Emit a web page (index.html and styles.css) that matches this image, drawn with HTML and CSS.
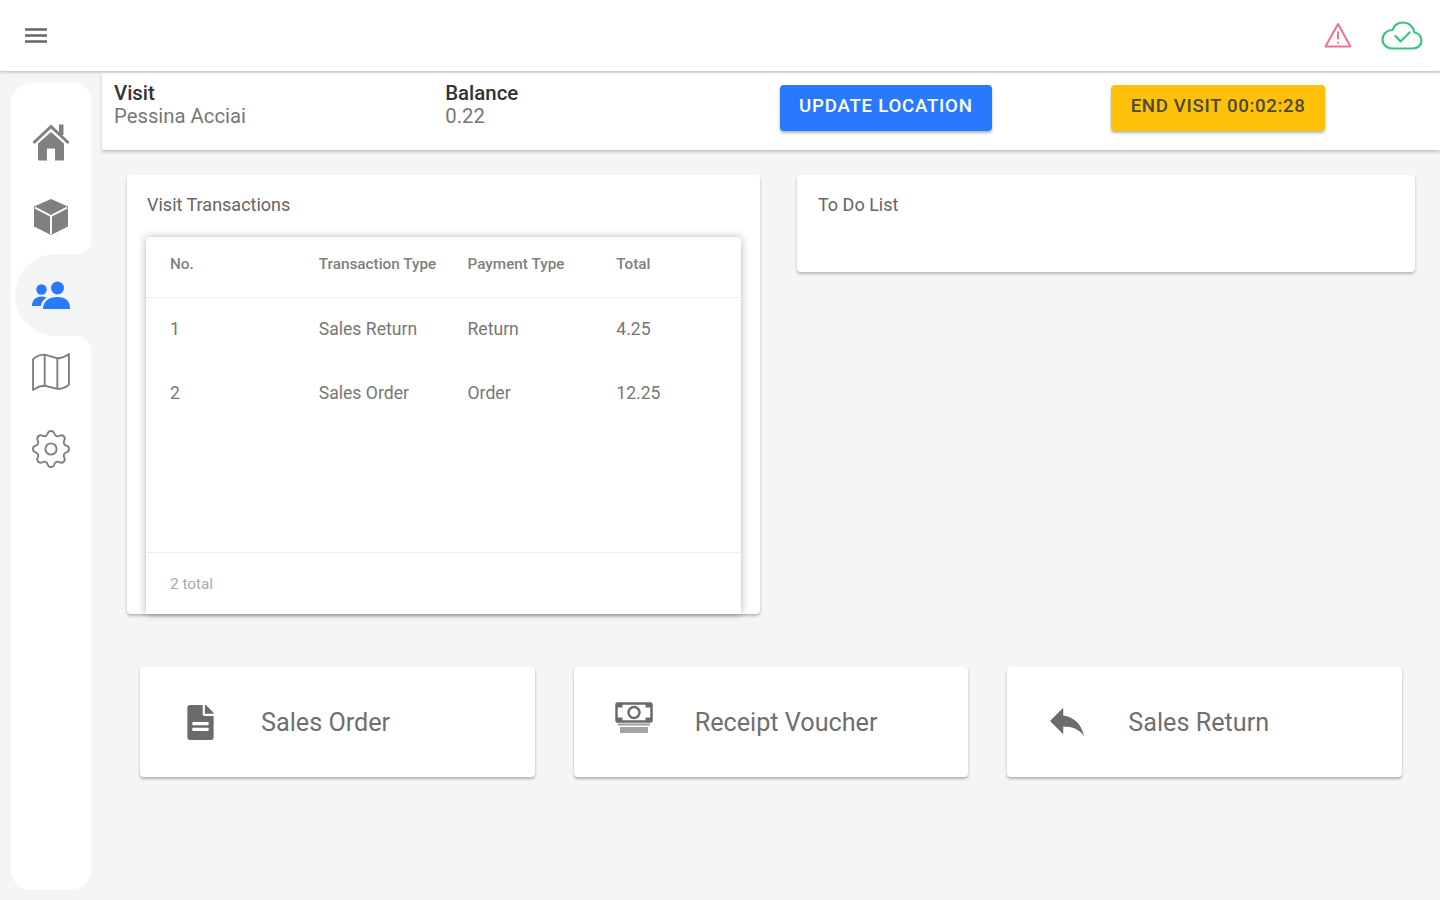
FILE: index.html
```html
<!DOCTYPE html>
<html lang="en">
<head>
<meta charset="utf-8">
<title>Visit</title>
<link rel="stylesheet" href="styles.css">
</head>
<body>
<div class="app">
  <header class="topbar">
    <svg class="menu-icon" viewBox="0 0 22 15"><path d="M0 1.500h22M0 7.500h22M0 13.500h22"/></svg>
    <div class="status-icons">
      <svg class="warn-icon" viewBox="0 0 28 26"><path d="M14 2 L26.500 24.500 H1.500 Z"/><path d="M14 9.500v8M14 20v1.500"/></svg>
      <svg class="cloud-icon" viewBox="0 0 42 29"><path d="M11 27.500h21c5 0 8.500-3.600 8.500-8 0-4.200-3-7.500-7-8C32 6 28 1.500 22 1.500c-5 0-9 3-10.500 7.500C6 9 1.500 13 1.500 18.500c0 5 4.500 9 9.500 9z"/><path d="M14.500 15l5 5.500 9-9"/></svg>
    </div>
  </header>
  <div class="body">
    <nav class="sidebar">
      <div class="nav-top">
        <a class="nav-item">
          <svg class="nav-icon" viewBox="0 0 38 37"><path class="gray-fill" d="M19 8.500 L32 20 V36 Q32 37 31 37 H23 V25 H15 V37 H7 Q6 37 6 36 V20 Z"/><path class="gray-line" d="M1.500 19.500 L19 3 L36.500 19.500"/><path class="gray-fill" d="M27 1h4.500v10.500H27z"/></svg>
        </a>
        <a class="nav-item">
          <svg class="nav-icon cube" viewBox="0 0 36 38"><path class="gray-fill" d="M18 0 L36 8 V29 L18 38 L0 29 V8 Z"/><path class="seam" d="M1 9 L18 18 L35 9 M18 18 V37"/></svg>
        </a>
      </div>
      <div class="nav-active-wrap">
        <a class="nav-item active">
          <svg class="nav-icon" viewBox="0 0 38 28"><circle class="blue" cx="9.500" cy="8.500" r="5.200"/><circle class="blue" cx="25.500" cy="7" r="6.500"/><path class="blue" d="M0 25c0-6 4-9.500 9.500-9.500 2 0 3.700.4 5 1.300C11.500 18.800 9.500 21 8.700 25z"/><path class="blue" d="M11 28c0-8 6-12 14.500-12S38 20 38 28z"/></svg>
        </a>
      </div>
      <div class="nav-bottom">
        <a class="nav-item short">
          <svg class="nav-icon" viewBox="0 0 36 36"><path class="gray-stroke" d="M1 6c3-3 7-4.500 11-4.500L24 5c4 0 7-1 11-4v29c-3 2.500-7 4-11 4L12 31c-4 0-8 2-11 4z"/><path class="gray-stroke" d="M12 1.500V31M24 5v29"/></svg>
        </a>
        <a class="nav-item short">
          <svg class="nav-icon" viewBox="2.500 2.500 19 19"><path class="gray-stroke thin" d="M10.325 4.317c.426-1.756 2.924-1.756 3.350 0a1.724 1.724 0 002.573 1.066c1.543-.94 3.310.826 2.370 2.370a1.724 1.724 0 001.065 2.572c1.756.426 1.756 2.924 0 3.350a1.724 1.724 0 00-1.066 2.573c.94 1.543-.826 3.310-2.370 2.370a1.724 1.724 0 00-2.572 1.065c-.426 1.756-2.924 1.756-3.350 0a1.724 1.724 0 00-2.573-1.066c-1.543.94-3.310-.826-2.370-2.370a1.724 1.724 0 00-1.065-2.572c-1.756-.426-1.756-2.924 0-3.350a1.724 1.724 0 001.066-2.573c-.94-1.543.826-3.310 2.370-2.370.996.608 2.296.07 2.572-1.065z"/><circle class="gray-stroke thin" cx="12" cy="12" r="2.800"/></svg>
        </a>
      </div>
    </nav>
    <main class="main">
      <section class="visit-bar">
        <div class="info"><strong>Visit</strong><span>Pessina Acciai</span></div>
        <div class="info"><strong>Balance</strong><span>0.22</span></div>
        <div class="btn-cell"><button class="btn btn-blue">UPDATE LOCATION</button></div>
        <div class="btn-cell"><button class="btn btn-yellow">END VISIT 00:02:28</button></div>
      </section>
      <section class="cards">
        <div class="card card-left">
          <h2 class="card-title">Visit Transactions</h2>
          <div class="table-wrap">
            <table class="table">
              <thead>
                <tr><th>No.</th><th>Transaction Type</th><th>Payment Type</th><th>Total</th></tr>
              </thead>
              <tbody>
                <tr><td>1</td><td>Sales Return</td><td>Return</td><td>4.25</td></tr>
                <tr><td>2</td><td>Sales Order</td><td>Order</td><td>12.25</td></tr>
              </tbody>
            </table>
            <div class="table-footer">2 total</div>
          </div>
        </div>
        <div class="card card-right">
          <h2 class="card-title">To Do List</h2>
        </div>
      </section>
      <section class="actions">
        <a class="action">
          <span class="action-icon"><svg class="doc-icon" viewBox="0 0 384 512"><path d="M224 136V0H36C16 0 0 16 0 36v440c0 20 16 36 36 36h312c20 0 36-16 36-36V160H248c-13.200 0-24-10.800-24-24zm88 234c0 6.600-5.400 12-12 12H84c-6.600 0-12-5.400-12-12v-26c0-6.600 5.400-12 12-12h216c6.600 0 12 5.400 12 12v26zm0-84c0 6.600-5.400 12-12 12H84c-6.600 0-12-5.400-12-12v-26c0-6.600 5.400-12 12-12h216c6.600 0 12 5.400 12 12v26zm72-164.100v6.100H256V0h6.100c6.400 0 12.500 2.500 17 7l97.900 98c4.500 4.500 7 10.600 7 16.900z"/></svg></span>
          <span class="action-label">Sales Order</span>
        </a>
        <a class="action">
          <span class="action-icon"><svg class="money-icon" viewBox="0 0 38 31"><rect class="money-note" x="1.500" y="1.500" width="35" height="18" rx="1"/><circle class="money-ring" cx="19" cy="10.500" r="5.500"/><path class="money-corner" d="M1.500 1.500h6v4h-6zM30.500 1.500h6v4h-6zM1.500 15.500h6v4h-6zM30.500 15.500h6v4h-6z"/><path class="money-stack" d="M3 22.500h32"/><path class="money-base" d="M5 25h28v6H5z"/></svg></span>
          <span class="action-label">Receipt Voucher</span>
        </a>
        <a class="action">
          <span class="action-icon"><svg class="reply-icon" viewBox="3 5 18 15"><path d="M10 9V5l-7 7 7 7v-4.100c5 0 8.500 1.600 11 5.100-1-5-4-10-11-11z"/></svg></span>
          <span class="action-label">Sales Return</span>
        </a>
      </section>
    </main>
  </div>
</div>
</body>
</html>
```

FILE: styles.css
```css
* { box-sizing: border-box; }
html, body { margin: 0; height: 100%; }
body {
  background: #f3f5f7;
  font-family: Roboto, "Liberation Sans", sans-serif;
  color: #5f6368;
  overflow: hidden;
}
.app { display: flex; flex-direction: column; height: 900px; }

.topbar {
  height: 71px;
  flex: none;
  background: #fff;
  box-shadow: 0 1px 3px rgba(0,0,0,.28);
  display: flex;
  align-items: center;
  justify-content: space-between;
  padding: 0 17px 0 25px;
  position: relative;
  z-index: 2;
}
.menu-icon { width: 22px; height: 15px; fill: none; stroke: #666; stroke-width: 2.4; }
.status-icons { display: flex; align-items: center; gap: 29px; }
.warn-icon { width: 28px; height: 26px; margin-top: -2px; fill: none; stroke: #f0728a; stroke-width: 2; stroke-linejoin: round; }
.cloud-icon { width: 42px; height: 29px; fill: none; stroke: #36c47f; stroke-width: 2.2; stroke-linejoin: round; stroke-linecap: round; }

.body { display: flex; flex: 1; min-height: 0; }

.sidebar {
  width: 80px;
  height: 807px;
  margin: 12px 0 0 11px;
  flex: none;
  display: flex;
  flex-direction: column;
}
.nav-top {
  height: 171px;
  background: #fff;
  border-radius: 20px 16px 14px 0;
  padding-top: 21px;
}
.nav-bottom {
  flex: 1;
  background: #fff;
  border-radius: 0 14px 20px 20px;
  display: flex;
  flex-direction: column;
  gap: 5px;
}
.nav-item { display: flex; align-items: center; justify-content: center; height: 75px; }
.nav-item.short { height: 72px; }
.nav-active-wrap { background: linear-gradient(to right, #fff 40px, #f3f5f7 40px); padding-left: 4px; }
.nav-item.active {
  height: 82px;
  background: #f3f5f7;
  border-radius: 41px 0 0 41px;
  padding-right: 4px;
}
.nav-icon { width: 38px; height: 38px; overflow: visible; }
.nav-icon.cube { width: 34px; }
.gray-fill { fill: #808080; }
.gray-line { fill: none; stroke: #808080; stroke-width: 3; }
.seam { fill: none; stroke: #fff; stroke-width: 2; }
.blue { fill: #2979ff; }
.gray-stroke { fill: none; stroke: #808080; stroke-width: 1.8; stroke-linejoin: round; }
.gray-stroke.thin { stroke-width: .95; }

.main { flex: 1; min-width: 0; margin: 2px 0 0 11px; display: flex; flex-direction: column; }

.visit-bar {
  height: 77px;
  flex: none;
  background: #fff;
  box-shadow: 0 2px 3px rgba(0,0,0,.22);
  display: grid;
  grid-template-columns: repeat(4, 1fr);
  padding: 0 1px 0 12px;
}
.info { display: flex; flex-direction: column; padding-top: 8px; font-size: 20.3px; }
.info strong { font-weight: 500; color: #333; font-size: 20.4px; line-height: 24px; }
.info span { color: #777; line-height: 23px; }
.btn-cell { padding: 12px 0 0 3.4px; }
.btn {
  height: 46px;
  border: 0;
  border-radius: 4px;
  font-family: inherit;
  font-size: 18.67px;
  font-weight: 500;
  letter-spacing: .75px;
  box-shadow: 0 2px 3px rgba(0,0,0,.3);
  padding: 0 0 4px;
}
.btn-blue { width: 212px; background: #2979ff; color: #fff; }
.btn-yellow { width: 214px; background: #ffc107; color: #4a4a3a; letter-spacing: .65px; }

.cards { display: flex; align-items: flex-start; gap: 37px; padding: 25px 25px 0; }
.card { background: #fff; border-radius: 4px; box-shadow: 0 2px 3px rgba(0,0,0,.25); }
.card-left { width: 633px; height: 439px; padding: 20px 19px 0 19px; display: flex; flex-direction: column; }
.card-right { flex: 1; height: 97px; padding: 20px 20px 20px 21px; }
.card-title { margin: 0; font-size: 18px; line-height: 20px; font-weight: 400; color: #666; }
.card-left .card-title { padding-left: 1px; }
.table-wrap {
  margin-top: 22px;
  flex: 1;
  box-shadow: 0 0 8px rgba(0,0,0,.3);
  border-radius: 4px 4px 0 0;
  display: flex;
  flex-direction: column;
}
.table { width: 100%; border-collapse: collapse; table-layout: fixed; }
.table th, .table td { text-align: left; padding: 0 0 0 24px; }
.table th { height: 60px; font-size: 15.3px; font-weight: 500; color: #808080; border-bottom: 1px solid #eee; padding-bottom: 6px; white-space: nowrap; }
.table td { height: 64px; font-size: 17.6px; color: #777; }
.table-footer {
  margin-top: auto;
  height: 62px;
  border-top: 1px solid #eee;
  padding: 22px 24px 0;
  font-size: 15.3px;
  color: #aaa;
}

.actions {
  display: grid;
  grid-template-columns: repeat(3, 1fr);
  column-gap: 39px;
  padding: 53px 38px 0;
}
.action {
  height: 110px;
  background: #fff;
  border-radius: 4px;
  box-shadow: 0 2px 3px rgba(0,0,0,.28);
  display: flex;
  align-items: center;
}
.action-icon { width: 121px; flex: none; display: flex; justify-content: center; }
.action-label { font-size: 25.2px; color: #6f6f6f; }
.doc-icon { width: 29px; height: 35px; fill: #6b6b6b; }
.reply-icon { width: 34px; height: 30px; margin-left: -2px; fill: #6b6b6b; }
.money-icon { width: 38px; height: 31px; margin-top: -10px; }
.money-note { fill: #fff; stroke: #6b6b6b; stroke-width: 2.5; }
.money-ring { fill: none; stroke: #6b6b6b; stroke-width: 2.5; }
.money-corner { fill: #6b6b6b; }
.money-stack { fill: none; stroke: #9a9a9a; stroke-width: 2; }
.money-base { fill: #a5a5a5; }
```
